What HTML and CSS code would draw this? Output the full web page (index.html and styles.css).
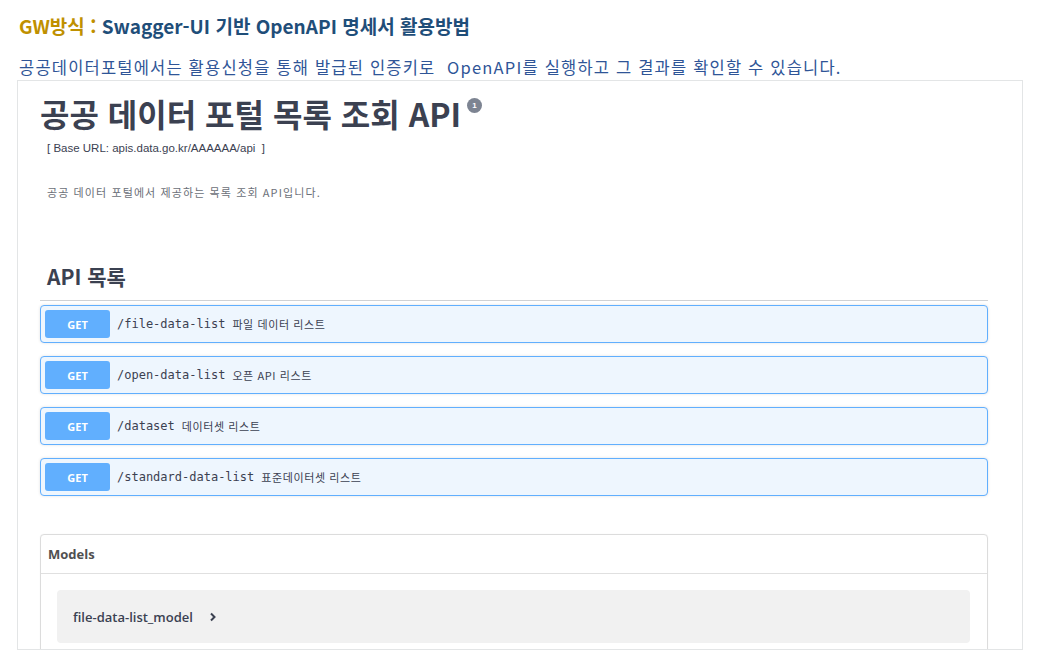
FILE: index.html
```html
<!DOCTYPE html>
<html lang="ko">
<head>
<meta charset="utf-8">
<title>Swagger-UI 기반 OpenAPI 명세서 활용방법</title>
<link rel="stylesheet" href="styles.css">
</head>
<body>
<header class="doc-head">
  <h1 class="doc-title"><span class="gw">GW방식 :</span> Swagger-UI 기반 OpenAPI 명세서 활용방법</h1>
  <p class="doc-sub">공공데이터포털에서는 활용신청을 통해 발급된 인증키로&nbsp; OpenAPI를 실행하고 그 결과를 확인할 수 있습니다.</p>
</header>
<div class="frame">
  <div class="info">
    <h2 class="api-title">공공 데이터 포털 목록 조회 API<span class="badge">1</span></h2>
    <p class="base-url">[ Base URL: apis.data.go.kr/AAAAAA/api&nbsp; ]</p>
    <p class="desc">공공 데이터 포털에서 제공하는 목록 조회 API입니다.</p>
  </div>
  <section class="ops">
    <h3 class="tag">API 목록</h3>
    <div class="op"><span class="method">GET</span><span class="path">/file-data-list</span><span class="summary">파일 데이터 리스트</span></div>
    <div class="op"><span class="method">GET</span><span class="path">/open-data-list</span><span class="summary">오픈 API 리스트</span></div>
    <div class="op"><span class="method">GET</span><span class="path">/dataset</span><span class="summary">데이터셋 리스트</span></div>
    <div class="op"><span class="method">GET</span><span class="path">/standard-data-list</span><span class="summary">표준데이터셋 리스트</span></div>
  </section>
  <section class="models">
    <h4 class="models-head">Models</h4>
    <div class="models-body">
      <div class="model">
        <span class="model-name">file-data-list_model</span>
        <svg class="chev" width="8" height="10" viewBox="0 0 8 10" aria-hidden="true"><path d="M2 1.5 L5.5 5 L2 8.5" fill="none" stroke="#3b4151" stroke-width="2"/></svg>
      </div>
    </div>
  </section>
</div>
</body>
</html>
```

FILE: styles.css
```css
* { box-sizing: border-box; }
body {
  margin: 0;
  background: #ffffff;
  font-family: "Noto Sans CJK KR", "Noto Sans", sans-serif;
  color: #3b4151;
}
.doc-head { padding: 14px 19px 0; }
.doc-title {
  margin: 0;
  font-size: 19px;
  line-height: 24px;
  font-weight: 700;
  color: #1f4e79;
}
.doc-title .gw { color: #bf9000; }
.doc-sub {
  margin: 18px 0 0;
  font-size: 16.5px;
  line-height: 22px;
  letter-spacing: 1.2px;
  font-weight: 400;
  color: #2f5597;
}
.frame {
  margin: 2px 0 0 17px;
  width: 1006px;
  height: 570px;
  border: 1px solid #e3e5e6;
  overflow: hidden;
  padding: 0 34px 0 22px;
}
.info { padding: 12px 0 0; }
.api-title {
  margin: 0;
  font-size: 32px;
  line-height: 40px;
  font-weight: 700;
  color: #3b4151;
}
.badge {
  display: inline-flex;
  align-items: center;
  justify-content: center;
  width: 15px;
  height: 15px;
  margin-left: 6px;
  border-radius: 50%;
  background: #7d8492;
  color: #fff;
  font-family: "Liberation Sans", sans-serif;
  font-size: 8px;
  line-height: 1;
  vertical-align: top;
  margin-top: 5px;
}
.base-url {
  margin: 7px 0 0 7px;
  font-family: "Liberation Sans", "Noto Sans CJK KR", sans-serif;
  font-size: 11.5px;
  line-height: 16px;
  color: #3b4151;
}
.desc {
  margin: 28px 0 0 7px;
  font-size: 11px;
  line-height: 16px;
  letter-spacing: 1.1px;
  color: #6b6f78;
}
.ops { margin-top: 62px; }
.tag {
  margin: 0;
  padding: 0 0 10px 7px;
  border-bottom: 1px solid #cfd1d4;
  font-size: 21px;
  line-height: 28px;
  font-weight: 700;
  color: #3b4151;
}
.op {
  display: flex;
  align-items: center;
  height: 38px;
  margin-top: 4px;
  margin-bottom: 13px;
  padding: 0 4px;
  background: #eef6fe;
  border: 1px solid #61affe;
  border-radius: 4px;
  box-shadow: 0 0 3px rgba(0, 0, 0, 0.12);
}
.op + .op { margin-top: 0; }
.method {
  display: flex;
  align-items: center;
  justify-content: center;
  width: 65px;
  height: 28px;
  border-radius: 3px;
  background: #61affe;
  color: #fff;
  font-family: "Open Sans", sans-serif;
  font-size: 11px;
  font-weight: 700;
}
.path {
  margin-left: 7px;
  font-family: "DejaVu Sans Mono", "Liberation Mono", monospace;
  font-size: 12px;
  font-weight: 400;
  color: #3b4151;
}
.summary {
  margin-left: 7px;
  font-size: 11px;
  letter-spacing: 0.6px;
  color: #3b4151;
}
.models {
  margin-top: 38px;
  border: 1px solid #dcdcdc;
  border-radius: 4px;
  box-shadow: 0 0 1px rgba(0, 0, 0, 0.1);
}
.models-head {
  margin: 0;
  height: 39px;
  display: flex;
  align-items: center;
  padding-left: 7px;
  border-bottom: 1px solid #e0e0e0;
  font-family: "Open Sans", sans-serif;
  font-size: 13px;
  font-weight: 700;
  color: #505050;
}
.models-body { padding: 16px 17px 20px 16px; }
.model {
  display: flex;
  align-items: center;
  height: 53px;
  padding-left: 16px;
  background: #f1f1f1;
  border-radius: 4px;
}
.model-name {
  font-family: "Open Sans", sans-serif;
  font-size: 13px;
  font-weight: 600;
  color: #3b4151;
}
.chev { margin-left: 16px; }
```
